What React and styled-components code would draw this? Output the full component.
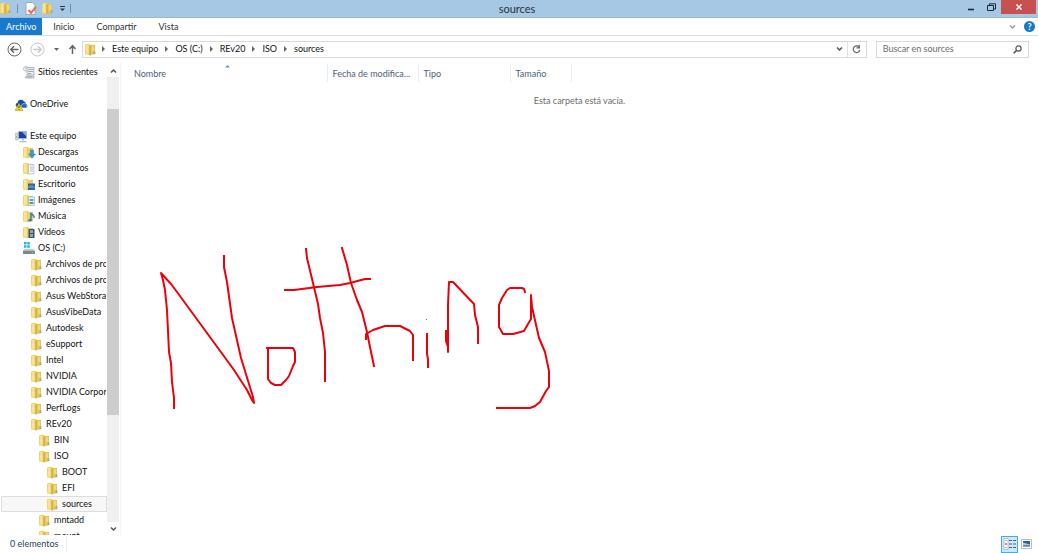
import React, { useState } from "react";
import styled, { createGlobalStyle } from "styled-components";

const treeItems = [
  { name: "Sitios recientes", level: 1, icon: "recent", gap: 16 },
  { name: "OneDrive", level: 0, icon: "onedrive", gap: 16 },
  { name: "Este equipo", level: 0, icon: "computer" },
  { name: "Descargas", level: 1, icon: "downloads" },
  { name: "Documentos", level: 1, icon: "documents" },
  { name: "Escritorio", level: 1, icon: "desktop" },
  { name: "Imágenes", level: 1, icon: "pictures" },
  { name: "Música", level: 1, icon: "music" },
  { name: "Vídeos", level: 1, icon: "videos" },
  { name: "OS (C:)", level: 1, icon: "drive" },
  { name: "Archivos de programa", level: 2 },
  { name: "Archivos de programa (x86)", level: 2 },
  { name: "Asus WebStorage", level: 2 },
  { name: "AsusVibeData", level: 2 },
  { name: "Autodesk", level: 2 },
  { name: "eSupport", level: 2 },
  { name: "Intel", level: 2 },
  { name: "NVIDIA", level: 2 },
  { name: "NVIDIA Corporation", level: 2 },
  { name: "PerfLogs", level: 2 },
  { name: "REv20", level: 2 },
  { name: "BIN", level: 3 },
  { name: "ISO", level: 3 },
  { name: "BOOT", level: 4 },
  { name: "EFI", level: 4 },
  { name: "sources", level: 4 },
  { name: "mntadd", level: 3 },
  { name: "mount", level: 3 },
];

const crumbs = ["Este equipo", "OS (C:)", "REv20", "ISO", "sources"];

// pen strokes drawn over the empty folder
const strokes = [
  "24,173 24,163 22,147 21,128 19,117 17,75 15,55 13,45 11,38 21,49 27,57 76,124 84,135 97,155 102,165 104,168 103,162 91,123 82,83 77,47 74,32 74,21",
  "118,115 118,144 121,148 125,150 131,150 136,145 139,141 143,131 145,127 145,117 143,113 117,113",
  "156,14 157,23 163,48 168,69 170,83 173,98 175,117 175,146",
  "135,55 144,55 167,52 190,50 200,48 215,44 220,44",
  "192,13 197,30 201,48 207,65 212,77 217,97 221,117 224,131",
  "216,104 216,99 223,95 235,91 250,91 260,96 263,100 263,125",
  "277,99 277,119 278,124 278,132",
  "296,96 296,106 298,112 298,117 298,70 299,47 303,47 324,69 325,80 328,92 328,108",
  "375,57 374,54 372,53 360,53 357,55 352,63 349,70 349,92 353,99 363,99 374,96 378,89 381,84 381,60 382,72 389,103 395,117 399,136 399,152 396,156 390,167 385,171 380,173 347,173",
];

const FolderIcon = () => (
  <svg width="13" height="13" viewBox="0 0 13 13" aria-hidden="true">
    <path d="M5 2l5-.2v9.5l-5 .8z" fill="#e3c45a" />
    <path d="M0 1.5L3.5.7 6 1.8v10.7L0 11.3z" fill="#ecd06a" />
    <path d="M.8 2l2.7-.6v9.7l-2.7-.5z" fill="#f7e493" />
    <path d="M4.2 2.4l1.8-.2v10.3l-1.8-.4z" fill="#d6b342" />
    <path d="M6.8 3l2.4-.2v5.4l-2.4.4z" fill="#efd87f" />
    <path d="M8.6 8.3h1.8V11l-1.8.3z" fill="#a9a88f" />
  </svg>
);

const overlays = {
  downloads: (
    <path d="M7.5 4h3v4h2L9 12.3 5.5 8h2z" fill="#3599dc" stroke="#176bad" strokeWidth=".4" />
  ),
  documents: (
    <>
      <path d="M5.5 2.5H11V12H5.5z" fill="#f4f7f9" stroke="#a6b1ba" strokeWidth=".6" />
      <path d="M7 5h3M7 7h3M7 9h3" stroke="#9db5c8" strokeWidth=".8" />
    </>
  ),
  desktop: (
    <>
      <path d="M5 5.5h7v6H5z" fill="#2668a9" />
      <path d="M5 8l4-1 3 2v2.5H5z" fill="#4c91c9" />
      <path d="M5 11h7" stroke="#173b61" />
    </>
  ),
  pictures: (
    <>
      <path d="M5.5 3h6v8.5h-6z" fill="#eaf5fb" stroke="#8ea5b2" strokeWidth=".6" />
      <path d="M6.5 5h4v2h-4z" fill="#58a5d3" />
      <path d="M6.5 8h4v2h-4z" fill="#65946d" />
    </>
  ),
  music: (
    <>
      <path d="M8 10V3c1 2 4 2 3 5" fill="none" stroke="#287cc0" strokeWidth="1.4" />
      <ellipse cx="7" cy="10.3" rx="1.7" ry="1.3" fill="#287cc0" />
    </>
  ),
  videos: (
    <>
      <path d="M5.5 3h6v9h-6z" fill="#45505b" />
      <path d="M7 4h3v3H7zM7 8h3v3H7z" fill="#7ca9c8" />
    </>
  ),
};

const ItemIcon = ({ type }) => {
  if (type === "onedrive") {
    return (
      <svg width="13" height="13" viewBox="0 0 13 13" aria-hidden="true">
        <path d="M1 8a2 2 0 0 1 1.5-3A3.5 3.5 0 0 1 9 3.5c1 0 1.8 1 1.8 2.2A2.3 2.3 0 0 1 11 10H3z" fill="#164fa3" />
        <path d="M6.5 10V7.5a2.5 2.5 0 0 1 4-1.5c2 1 2 3 .5 4z" fill="#1c69c4" stroke="#fff" strokeWidth=".5" />
        <path d="M4 5.5L8 12.5H0z" fill="#f8cf25" stroke="#ca981b" strokeWidth=".6" />
        <path d="M4 8v2M4 11v.7" stroke="#443600" />
      </svg>
    );
  }
  if (type === "computer") {
    return (
      <svg width="13" height="13" viewBox="0 0 13 13" aria-hidden="true">
        <path d="M.5 3h2.5v7H.5z" fill="#d6dce1" stroke="#a8b1b7" strokeWidth=".6" />
        <path d="M1 7h1" stroke="#3caa47" />
        <path d="M3.5 1.5h8v7h-8z" fill="#1f3ea7" stroke="#a9b8ca" strokeWidth=".8" />
        <path d="M7 2h4v4z" fill="#7eabe2" />
        <path d="M7 9h2v1.5H7zM5 11h6l1 1.2H4z" fill="#b4bfc7" />
      </svg>
    );
  }
  if (type === "recent") {
    return (
      <svg width="13" height="13" viewBox="0 0 13 13" aria-hidden="true">
        <path d="M4 1.5h7v7.5H4zM3 10h8v2H2z" fill="#edf1f4" stroke="#929ea7" strokeWidth=".7" />
        <path d="M6 3.5h4M5 5.5h5M5 7.5h3M4 11h5" stroke="#8098aa" strokeWidth=".8" />
        <circle cx="2.8" cy="2.8" r="2.3" fill="#f8f8f8" stroke="#8a959d" strokeWidth=".6" />
        <path d="M3 1.5V3h1" fill="none" stroke="#777" strokeWidth=".6" />
      </svg>
    );
  }
  if (type === "drive") {
    return (
      <svg width="13" height="13" viewBox="0 0 13 13" aria-hidden="true">
        <path d="M1 0h2.5v2.5H1zM4.2 0h2.6v2.5H4.2zM1 3.2h2.5v2.5H1zM4.2 3.2h2.6v2.5H4.2z" fill="#21b3e8" />
        <path d="M1.5 6.8h9L12 9H0z" fill="#c4cbd0" />
        <path d="M0 8.8h12V12H0z" fill="#7b868e" />
        <path d="M8.5 10.5h2" stroke="#62d66c" />
      </svg>
    );
  }
  if (overlays[type]) {
    return (
      <svg width="13" height="13" viewBox="0 0 13 13" aria-hidden="true">
        <path d="M4 2l6-.2v9.5l-6 .8z" fill="#e8cb66" />
        <path d="M0 1.5L3.5.7l2.5 1.1v10.7L0 11.3z" fill="#ecd06a" />
        <path d="M.8 2l2.9-.6v9.7l-2.9-.5z" fill="#f8e79b" />
        {overlays[type]}
      </svg>
    );
  }
  return <FolderIcon />;
};

const Chevron = ({ up, color = "#555" }) => (
  <svg width="7" height="6" viewBox="0 0 7 6" aria-hidden="true">
    <path d={up ? "M1 4.5L3.5 2 6 4.5" : "M1 1.5L3.5 4 6 1.5"} fill="none" stroke={color} strokeWidth="1.5" />
  </svg>
);

const TitleBar = () => (
  <TitleBarWrapper>
    <QuickAccess>
      <FolderIcon />
      <QuickLine />
      <IconButton aria-label="Propiedades">
        <svg width="13" height="13" viewBox="0 0 13 13">
          <path d="M1 .5h6.5L10 3v9.5H1z" fill="#fafafa" stroke="#929ba3" strokeWidth=".8" />
          <path d="M3.5 8l2.5 3L11 5" fill="none" stroke="#e5744a" strokeWidth="2" />
        </svg>
      </IconButton>
      <IconButton aria-label="Nueva carpeta">
        <FolderIcon />
      </IconButton>
      <IconButton aria-label="Personalizar">
        <svg width="7" height="6" viewBox="0 0 7 6">
          <path d="M1 .5h5" stroke="#28394a" />
          <path d="M1 2.5h5L3.5 5z" fill="#28394a" />
        </svg>
      </IconButton>
      <QuickLine />
    </QuickAccess>
    <Title>sources</Title>
    <WindowButtons>
      <WindowButton aria-label="Minimizar">
        <svg width="8" height="8" viewBox="0 0 8 8">
          <path d="M1 6.5h6" stroke="#1d2730" strokeWidth="1.6" />
        </svg>
      </WindowButton>
      <WindowButton aria-label="Restaurar">
        <svg width="9" height="9" viewBox="0 0 9 9" fill="none" stroke="#1d2730">
          <path d="M2.5 2V.8h6V6H7" />
          <path d="M.5 2.5h6v5h-6z" />
        </svg>
      </WindowButton>
      <WindowButton $close aria-label="Cerrar">
        <svg width="8" height="8" viewBox="0 0 8 8">
          <path d="M1.5 1.5l5 5M6.5 1.5l-5 5" stroke="#fff" strokeWidth="1.5" />
        </svg>
      </WindowButton>
    </WindowButtons>
  </TitleBarWrapper>
);

const Ribbon = () => (
  <RibbonWrapper>
    <RibbonTab $file>Archivo</RibbonTab>
    <RibbonTab>Inicio</RibbonTab>
    <RibbonTab>Compartir</RibbonTab>
    <RibbonTab>Vista</RibbonTab>
    <RibbonActions>
      <IconButton aria-label="Expandir la cinta">
        <Chevron color="#999" />
      </IconButton>
      <HelpButton aria-label="Ayuda">?</HelpButton>
    </RibbonActions>
  </RibbonWrapper>
);

const AddressRow = () => {
  const [search, setSearch] = useState("");

  return (
    <AddressWrapper>
      <NavButtons>
        <IconButton aria-label="Atrás">
          <svg width="15" height="15" viewBox="0 0 15 15" fill="none" stroke="#666">
            <circle cx="7.5" cy="7.5" r="6.5" />
            <path d="M11.5 7.5H4M7 4.3L3.8 7.5 7 10.7" strokeWidth="1.5" />
          </svg>
        </IconButton>
        <IconButton aria-label="Adelante">
          <svg width="15" height="15" viewBox="0 0 15 15" fill="none" stroke="#c9c9c9">
            <circle cx="7.5" cy="7.5" r="6.5" />
            <path d="M3.5 7.5H11M8 4.3l3.2 3.2L8 10.7" strokeWidth="1.3" />
          </svg>
        </IconButton>
        <IconButton aria-label="Ubicaciones recientes">
          <svg width="7" height="5" viewBox="0 0 7 5">
            <path d="M1 1h5L3.5 4z" fill="#666" />
          </svg>
        </IconButton>
        <IconButton aria-label="Subir">
          <svg width="9" height="11" viewBox="0 0 9 11" fill="none" stroke="#666" strokeWidth="1.5">
            <path d="M4.5 10V2M1.5 5l3-3.3 3 3.3" />
          </svg>
        </IconButton>
      </NavButtons>
      <AddressBar aria-label="Ruta">
        <FolderIcon />
        <Crumbs>
          {crumbs.map((crumb) => (
            <Crumb key={crumb}>
              <svg width="5" height="6" viewBox="0 0 5 6" aria-hidden="true">
                <path d="M1 0l3 3-3 3z" fill="#666" />
              </svg>
              <CrumbLink href="#">{crumb}</CrumbLink>
            </Crumb>
          ))}
        </Crumbs>
        <IconButton aria-label="Ubicaciones anteriores">
          <Chevron />
        </IconButton>
        <RefreshButton aria-label="Actualizar">
          <svg width="9" height="9" viewBox="0 0 9 9" fill="none" stroke="#666" strokeWidth="1.2">
            <path d="M7 2A3.3 3.3 0 1 0 7.8 5" />
            <path d="M7.3 0v2.8H4.5" />
          </svg>
        </RefreshButton>
      </AddressBar>
      <SearchBox>
        <SearchInput
          type="text"
          aria-label="Buscar en sources"
          placeholder="Buscar en sources"
          value={search}
          onChange={(e) => setSearch(e.target.value)}
        />
        <svg width="9" height="9" viewBox="0 0 9 9" fill="none" stroke="#555" aria-hidden="true">
          <circle cx="5.5" cy="3.5" r="2.6" strokeWidth="1.2" />
          <path d="M3.6 5.4L.7 8.3" strokeWidth="1.6" />
        </svg>
      </SearchBox>
    </AddressWrapper>
  );
};

const Sidebar = () => {
  const [selected, setSelected] = useState("sources");

  return (
    <SidebarWrapper>
      <Tree>
        {treeItems.map((item) => (
          <TreeItem key={item.name} $gap={item.gap}>
            <TreeButton
              $level={item.level}
              $selected={item.name === selected}
              onClick={() => setSelected(item.name)}
            >
              <ItemIcon type={item.icon} />
              {item.name}
            </TreeButton>
          </TreeItem>
        ))}
      </Tree>
      <ScrollBar>
        <ScrollButton aria-label="Desplazar arriba">
          <Chevron up />
        </ScrollButton>
        <ScrollTrack>
          <ScrollThumb />
        </ScrollTrack>
        <ScrollButton aria-label="Desplazar abajo">
          <Chevron />
        </ScrollButton>
      </ScrollBar>
    </SidebarWrapper>
  );
};

const FilePane = () => (
  <FilePaneWrapper>
    <FileTable>
      <thead>
        <tr>
          <HeaderCell $width={206} $first aria-sort="ascending">
            Nombre
            <SortMark width="7" height="4" viewBox="0 0 7 4" aria-hidden="true">
              <path d="M1 3.5L3.5 1 6 3.5z" fill="#6f93b5" />
            </SortMark>
          </HeaderCell>
          <HeaderCell $width={91}>Fecha de modifica...</HeaderCell>
          <HeaderCell $width={92}>Tipo</HeaderCell>
          <HeaderCell $width={61}>Tamaño</HeaderCell>
        </tr>
      </thead>
    </FileTable>
    <EmptyMessage>Esta carpeta está vacía.</EmptyMessage>
    <PenDrawing width="420" height="190" viewBox="0 0 420 190" aria-hidden="true">
      {strokes.map((points) => (
        <polyline key={points} points={points} />
      ))}
      <circle cx="276.5" cy="84.5" r=".5" strokeWidth="0" />
    </PenDrawing>
  </FilePaneWrapper>
);

const App = () => {
  return (
    <Window>
      <GlobalStyle />
      <TitleBar />
      <Ribbon />
      <AddressRow />
      <Body>
        <Sidebar />
        <FilePane />
      </Body>
      <StatusBar>
        <StatusText>0 elementos</StatusText>
        <ViewButtons>
          <ViewButton $active aria-label="Detalles">
            <svg width="13" height="12" viewBox="0 0 13 12">
              <path d="M1 .5h4v11H1z" fill="#fff" stroke="#9ca9b2" strokeWidth=".7" />
              <path d="M2 2.5h2M2 9.5h2" stroke="#a5b0b8" />
              <path d="M2 6h2" stroke="#e0524a" strokeWidth="1.4" />
              <path d="M6 2.5h3M10 2.5h3M6 6h3M10 6h3M6 9.5h3M10 9.5h3" stroke="#51606b" />
            </svg>
          </ViewButton>
          <ViewButton aria-label="Iconos grandes">
            <svg width="11" height="10" viewBox="0 0 11 10">
              <path d="M.5.5h10v9H.5z" fill="#fff" stroke="#b4bbc1" />
              <path d="M2 2h7v5H2z" fill="#28619c" />
              <path d="M2 3.5l7 2V7H2z" fill="#9bd0ec" />
              <path d="M2 7h7" stroke="#2b3f52" />
            </svg>
          </ViewButton>
        </ViewButtons>
      </StatusBar>
    </Window>
  );
};

export default App;

const GlobalStyle = createGlobalStyle`
  * {
    box-sizing: border-box;
  }

  body {
    margin: 0;
    background: #fff;
    color: #111;
    font-family: Lato, "Open Sans", sans-serif;
    font-size: 9px;
    line-height: 16px;
  }

  button,
  input {
    font: inherit;
    color: inherit;
  }

  svg {
    display: block;
    flex: none;
  }
`;

const Window = styled.div`
  display: flex;
  flex-direction: column;
  height: 100vh;
  overflow: hidden;
`;

const TitleBarWrapper = styled.header`
  display: grid;
  grid-template-columns: 1fr auto 1fr;
  align-items: start;
  height: 18px;
  background: #a6c8e4;
  border-bottom: 1px solid #95b9d8;
`;

const QuickAccess = styled.div`
  display: flex;
  align-items: center;
  gap: 4px;
  height: 17px;
`;

const QuickLine = styled.span`
  width: 1px;
  height: 9px;
  margin-right: 3px;
  background: #7290a9;
`;

const IconButton = styled.button`
  display: flex;
  align-items: center;
  justify-content: center;
  flex: none;
  padding: 0;
  border: none;
  background: none;
`;

const Title = styled.h1`
  margin: 0;
  padding-right: 4px;
  font-size: 11px;
  line-height: 18px;
  font-weight: normal;
  color: #26323c;
`;

const WindowButtons = styled.div`
  display: flex;
  justify-content: flex-end;
  padding-right: 2px;
`;

const WindowButton = styled(IconButton)`
  width: ${(props) => (props.$close ? "35px" : "20px")};
  height: 14px;
  background: ${(props) => (props.$close ? "#c75050" : "transparent")};
`;

const RibbonWrapper = styled.nav`
  display: flex;
  height: 18px;
  border-bottom: 1px solid #dadbdc;
`;

const RibbonTab = styled.button`
  padding: 0 11px;
  border: none;
  line-height: 17px;
  background: ${(props) => (props.$file ? "#1979ca" : "#fff")};
  color: ${(props) => (props.$file ? "#fff" : "#333")};

  &:first-child {
    padding: 0 6px;
  }
`;

const RibbonActions = styled.div`
  display: flex;
  align-items: center;
  gap: 8px;
  margin-left: auto;
  padding-right: 3px;
`;

const HelpButton = styled.button`
  width: 11px;
  height: 11px;
  padding: 0;
  border: none;
  border-radius: 50%;
  background: #1979ca;
  color: #fff;
  font-weight: bold;
  line-height: 11px;
`;

const AddressWrapper = styled.div`
  display: flex;
  align-items: center;
  height: 26px;
  padding: 0 9px 0 7px;
`;

const NavButtons = styled.div`
  display: flex;
  align-items: center;
  gap: 8px;
  width: 75px;
`;

const AddressBar = styled.nav`
  display: flex;
  align-items: center;
  flex: 1;
  min-width: 0;
  height: 17px;
  margin-right: 9px;
  padding-left: 2px;
  border: 1px solid #d9d9d9;
`;

const Crumbs = styled.ol`
  display: flex;
  flex: 1;
  margin: 0;
  padding: 0 0 0 3px;
  list-style: none;
`;

const Crumb = styled.li`
  display: flex;
  align-items: center;
  gap: 6px;
  padding-right: 6px;
`;

const CrumbLink = styled.a`
  color: #111;
  text-decoration: none;
`;

const RefreshButton = styled(IconButton)`
  align-self: stretch;
  width: 19px;
  margin-left: 4px;
  border-left: 1px solid #e2e2e2;
`;

const SearchBox = styled.div`
  display: flex;
  align-items: center;
  width: 15%;
  height: 17px;
  padding: 0 6px;
  border: 1px solid #d9d9d9;
`;

const SearchInput = styled.input`
  flex: 1;
  min-width: 0;
  height: 15px;
  padding: 0;
  border: none;
  outline: none;

  &::placeholder {
    color: #6d6d6d;
    opacity: 1;
  }
`;

const Body = styled.div`
  display: flex;
  flex: 1;
  min-height: 0;
`;

const SidebarWrapper = styled.aside`
  display: flex;
  width: 121px;
  padding-top: 2px;
  border-right: 1px solid #f3f3f3;
`;

const Tree = styled.ul`
  flex: 1;
  min-width: 0;
  margin: 0;
  padding: 0 0 0 1px;
  list-style: none;
  overflow: hidden;
`;

const TreeItem = styled.li`
  margin-bottom: ${(props) => props.$gap || 0}px;
`;

const TreeButton = styled.button`
  display: flex;
  align-items: center;
  gap: 2px;
  width: 100%;
  height: 16px;
  padding: 0 0 0 ${(props) => 13 + props.$level * 8}px;
  border: 1px solid ${(props) => (props.$selected ? "#dedede" : "transparent")};
  background: ${(props) => (props.$selected ? "#f7f7f7" : "none")};
  overflow: hidden;
  white-space: nowrap;
`;

const ScrollBar = styled.div`
  display: flex;
  flex-direction: column;
  width: 12px;
  margin-right: 1px;
  background: #f0f0f0;
`;

const ScrollButton = styled(IconButton)`
  height: 13px;
  background: #fff;
`;

const ScrollTrack = styled.div`
  flex: 1;
  padding-top: 32px;
`;

const ScrollThumb = styled.div`
  height: 74%;
  background: #cdcdcd;
`;

const FilePaneWrapper = styled.main`
  position: relative;
  flex: 1;
  min-width: 0;
  padding-top: 2px;
`;

const FileTable = styled.table`
  table-layout: fixed;
  width: 450px;
  border-collapse: collapse;
`;

const HeaderCell = styled.th`
  position: relative;
  width: ${(props) => props.$width}px;
  height: 18px;
  padding: 2px 3px 0 ${(props) => (props.$first ? 13 : 5)}px;
  border-right: 1px solid #e3edf6;
  color: #4c607a;
  font-weight: normal;
  text-align: left;
  white-space: nowrap;
`;

const SortMark = styled.svg`
  position: absolute;
  top: 0;
  right: 96px;
`;

const EmptyMessage = styled.p`
  margin: 11px 0 0;
  text-align: center;
  color: #6d6d6d;
`;

const PenDrawing = styled.svg`
  position: absolute;
  top: 173px;
  left: 29px;
  fill: none;
  stroke: #ec0009;
  stroke-width: 2;
  stroke-linecap: square;
  stroke-linejoin: round;

  circle {
    fill: #ec0009;
    stroke: none;
  }
`;

const StatusBar = styled.footer`
  display: flex;
  align-items: center;
  justify-content: space-between;
  height: 18px;
  padding: 0 3px 0 10px;
  color: #26445f;
`;

const StatusText = styled.span`
  padding-right: 8px;
  border-right: 1px solid #f0f0f0;
`;

const ViewButtons = styled.div`
  display: flex;
`;

const ViewButton = styled(IconButton)`
  width: 17px;
  height: 17px;
  border: 1px solid ${(props) => (props.$active ? "#4aa8e8" : "transparent")};
  background: ${(props) => (props.$active ? "#cce8f9" : "none")};
`;
